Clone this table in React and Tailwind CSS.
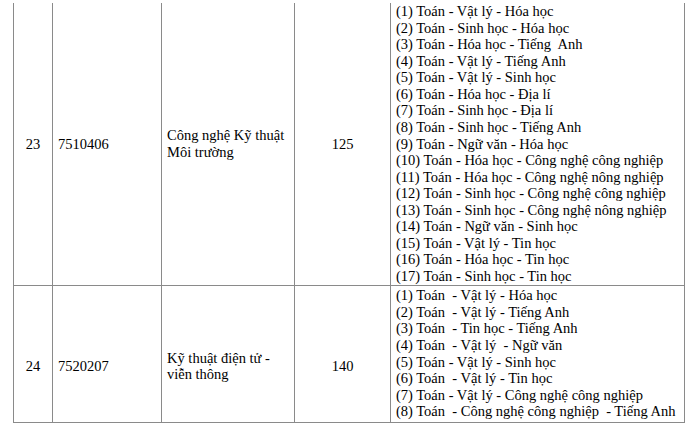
import React from 'react';

const rows = [
  {
    stt: '23',
    code: '7510406',
    name: ['Công nghệ Kỹ thuật', 'Môi trường'],
    quota: '125',
    shift: false,
    groups: [
      '(1) Toán - Vật lý - Hóa học',
      '(2) Toán - Sinh học - Hóa học',
      '(3) Toán - Hóa học - Tiếng  Anh',
      '(4) Toán - Vật lý - Tiếng Anh',
      '(5) Toán - Vật lý - Sinh học',
      '(6) Toán - Hóa học - Địa lí',
      '(7) Toán - Sinh học - Địa lí',
      '(8) Toán - Sinh học - Tiếng Anh',
      '(9) Toán - Ngữ văn - Hóa học',
      '(10) Toán - Hóa học - Công nghệ công nghiệp',
      '(11) Toán - Hóa học - Công nghệ nông nghiệp',
      '(12) Toán - Sinh học - Công nghệ công nghiệp',
      '(13) Toán - Sinh học - Công nghệ nông nghiệp',
      '(14) Toán - Ngữ văn - Sinh học',
      '(15) Toán - Vật lý - Tin học',
      '(16) Toán - Hóa học - Tin học',
      '(17) Toán - Sinh học - Tin học',
    ],
  },
  {
    stt: '24',
    code: '7520207',
    name: ['Kỹ thuật điện tử -', 'viễn thông'],
    quota: '140',
    shift: true,
    groups: [
      '(1) Toán  - Vật lý - Hóa học',
      '(2) Toán  - Vật lý - Tiếng Anh',
      '(3) Toán  - Tin học - Tiếng Anh',
      '(4) Toán  - Vật lý  - Ngữ văn',
      '(5) Toán - Vật lý - Sinh học',
      '(6) Toán  - Vật lý - Tin học',
      '(7) Toán - Vật lý - Công nghệ công nghiệp',
      '(8) Toán  - Công nghệ công nghiệp  - Tiếng Anh',
    ],
  },
];

const cell = 'border-x border-b border-[#8a8a8a] align-middle';

export default function App() {
  return (
    <div className="w-[698px] h-[433px] bg-white pt-[3px] pl-[13px] overflow-hidden font-serif text-[14.5px] leading-[16.56px] text-black">
      <table className="border-collapse table-fixed w-[671px] font-[Liberation_Serif]">
        <colgroup>
          <col className="w-[39px]" />
          <col className="w-[109px]" />
          <col className="w-[133px]" />
          <col className="w-[96px]" />
          <col className="w-[294px]" />
        </colgroup>
        <tbody>
          {rows.map((r) => (
            <tr key={r.stt} className={r.shift ? 'h-[137px]' : 'h-[282px]'}>
              <td className={`${cell} text-center ${r.shift ? 'pt-[25px]' : ''}`}>{r.stt}</td>
              <td className={`${cell} pl-[5px] ${r.shift ? 'pt-[25px]' : ''}`}>{r.code}</td>
              <td className={`${cell} pl-[5px] ${r.shift ? 'pt-[25px]' : ''}`}>
                {r.name[0]}
                <br />
                {r.name[1]}
              </td>
              <td className={`${cell} text-center ${r.shift ? 'pt-[25px]' : ''}`}>{r.quota}</td>
              <td className={`${cell} pl-[5px] whitespace-pre`}>
                {r.groups.map((g) => (
                  <div key={g}>{g}</div>
                ))}
              </td>
            </tr>
          ))}
        </tbody>
      </table>
    </div>
  );
}
